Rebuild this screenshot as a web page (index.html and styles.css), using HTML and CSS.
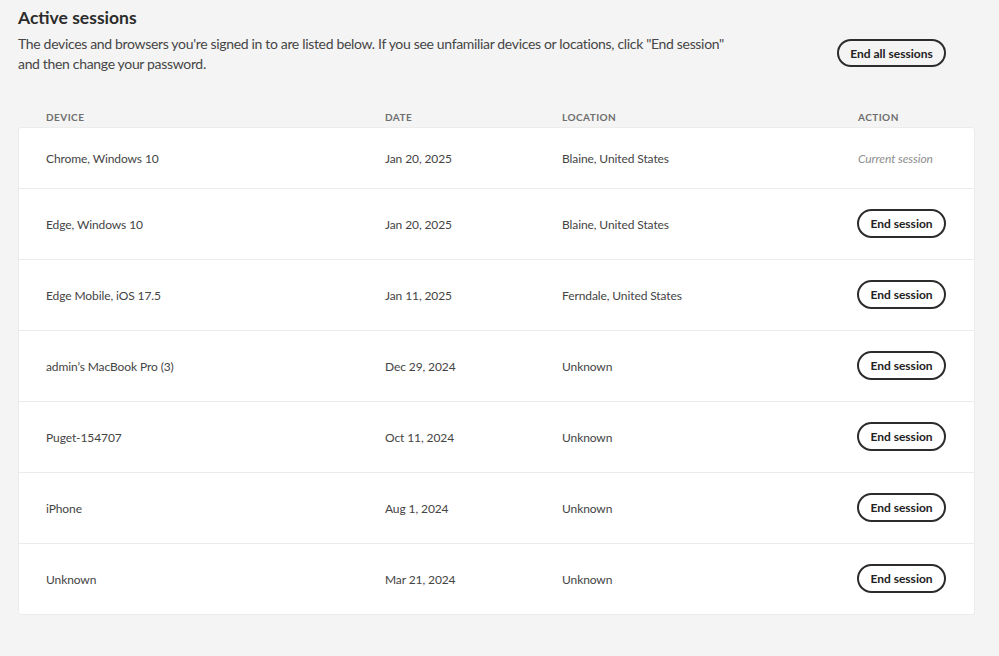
FILE: index.html
```html
<!DOCTYPE html>
<html lang="en">
<head>
<meta charset="utf-8">
<title>Active sessions</title>
<link rel="stylesheet" href="styles.css">
</head>
<body>
<main class="page">
  <h1 class="title">Active sessions</h1>
  <div class="intro">
    <p class="desc">The devices and browsers you're signed in to are listed below. If you see unfamiliar devices or locations, click "End session"<br>and then change your password.</p>
    <button class="pill pill-wide">End all sessions</button>
  </div>

  <div class="table">
    <div class="thead">
      <span>Device</span><span>Date</span><span>Location</span><span>Action</span>
    </div>
    <div class="card">
      <div class="row row-text">
        <span>Chrome, Windows 10</span><span>Jan 20, 2025</span><span>Blaine, United States</span><span class="current">Current session</span>
      </div>
      <div class="row">
        <span>Edge, Windows 10</span><span>Jan 20, 2025</span><span>Blaine, United States</span><span><button class="pill">End session</button></span>
      </div>
      <div class="row">
        <span>Edge Mobile, iOS 17.5</span><span>Jan 11, 2025</span><span>Ferndale, United States</span><span><button class="pill">End session</button></span>
      </div>
      <div class="row">
        <span>admin’s MacBook Pro (3)</span><span>Dec 29, 2024</span><span>Unknown</span><span><button class="pill">End session</button></span>
      </div>
      <div class="row">
        <span>Puget-154707</span><span>Oct 11, 2024</span><span>Unknown</span><span><button class="pill">End session</button></span>
      </div>
      <div class="row">
        <span>iPhone</span><span>Aug 1, 2024</span><span>Unknown</span><span><button class="pill">End session</button></span>
      </div>
      <div class="row">
        <span>Unknown</span><span>Mar 21, 2024</span><span>Unknown</span><span><button class="pill">End session</button></span>
      </div>
    </div>
  </div>
</main>
</body>
</html>
```

FILE: styles.css
```css
* { box-sizing: border-box; }
html, body { margin: 0; padding: 0; }
body {
  background: #f4f4f4;
  font-family: "Lato", "Open Sans", sans-serif;
  color: #4b4b4b;
  width: 999px;
  height: 656px;
  overflow: hidden;
}
.page {
  padding: 7px 24px 0 18px;
}
.title {
  margin: 0;
  font-size: 17.5px;
  line-height: 22px;
  font-weight: 700;
  color: #2c2c2c;
}
.intro {
  display: flex;
  align-items: center;
  justify-content: space-between;
  margin-top: 5px;
  padding-right: 29px;
}
.desc {
  margin: 0;
  width: 780px;
  font-size: 14px;
  letter-spacing: -0.33px;
  line-height: 20px;
  color: #464646;
}
.pill {
  font-family: inherit;
  font-weight: 700;
  font-size: 12px;
  color: #222;
  background: #fff;
  border: 2px solid #2c2c2c;
  border-radius: 15px;
  height: 29px;
  padding: 0 12px;
  cursor: pointer;
  white-space: nowrap;
}
.pill-wide {
  background: transparent;
  height: 28px;
  width: 109px;
  padding: 0;
  margin-top: -2px;
}
.row .pill { width: 89px; padding: 0; margin-left: -1px; margin-top: -1px; }
.table { margin-top: 33px; }
.thead, .row {
  display: grid;
  grid-template-columns: 339px 177px 296px 1fr;
  align-items: center;
  padding: 0 28px 0 28px;
}
.thead {
  height: 20px;
  font-size: 10px;
  font-weight: 700;
  letter-spacing: 0.45px;
  text-transform: uppercase;
  color: #6e6e6e;
}
.card {
  background: #fff;
  border: 1px solid #ececec;
  border-radius: 3px;
  width: 957px;
}
.row {
  height: 71px;
  padding-left: 27px;
  border-top: 1px solid #ebebeb;
  font-size: 12px;
  letter-spacing: -0.1px;
  color: #444;
}
.row:first-child { border-top: 0; }
.row-text { height: 60px; }
.current {
  font-style: italic;
  color: #8e8e8e;
}
```
